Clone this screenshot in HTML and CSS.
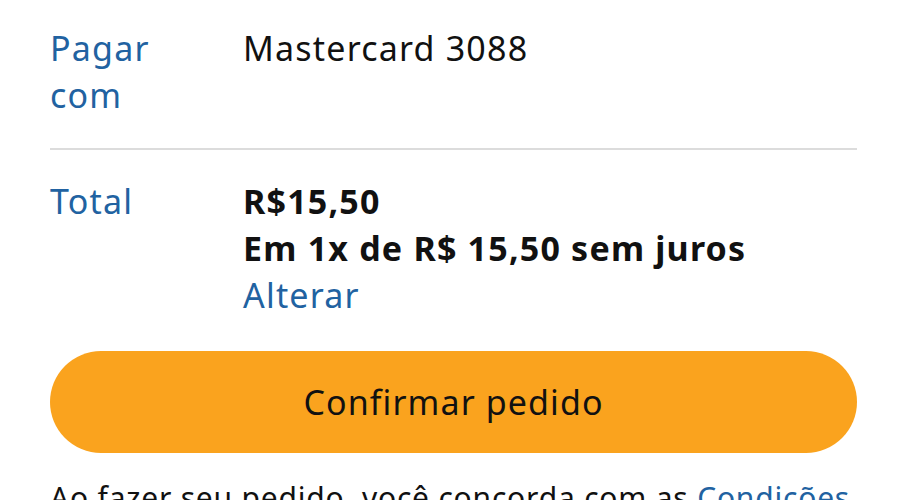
FILE: index.html
```html
<!DOCTYPE html>
<html lang="pt-BR">
<head>
<meta charset="utf-8">
<link rel="stylesheet" href="styles.css">
</head>
<body>
<main class="page">
  <section class="row">
    <div class="label">Pagar<br>com</div>
    <div class="value">Mastercard 3088</div>
  </section>
  <hr class="divider">
  <section class="row">
    <div class="label">Total</div>
    <div class="value">
      <div class="bold">R$15,50</div>
      <div class="bold">Em 1x de R$ 15,50 sem juros</div>
      <a class="link" href="#">Alterar</a>
    </div>
  </section>
  <button class="confirm">Confirmar pedido</button>
  <p class="terms">Ao fazer seu pedido, você concorda com as <a class="link" href="#">Condições</a></p>
</main>
</body>
</html>
```
FILE: styles.css
```css
html, body {
  margin: 0;
  padding: 0;
  background: #fff;
}
body {
  font-family: "Noto Sans", sans-serif;
  font-size: 34px;
  line-height: 47px;
  letter-spacing: 1.2px;
  color: #111;
  overflow: hidden;
}
.page {
  padding: 25px 50px 0 50px;
}
.row {
  display: flex;
}
.label {
  width: 193px;
  flex: none;
  color: #2162a1;
}
.value {
  flex: 1;
}
.bold {
  font-weight: 700;
}
.link {
  color: #2162a1;
  text-decoration: none;
}
.divider {
  border: none;
  border-top: 2px solid #dcdcdc;
  margin: 29px 0 28px 0;
}
.confirm {
  display: block;
  width: 100%;
  height: 102px;
  margin-top: 32px;
  border: none;
  border-radius: 51px;
  background: #faa31e;
  color: #111;
  font-family: inherit;
  font-size: 34px;
  letter-spacing: 1.1px;
}
.terms {
  margin: 21px 0 0 0;
  font-size: 30px;
  letter-spacing: 0.8px;
  white-space: nowrap;
}
```
